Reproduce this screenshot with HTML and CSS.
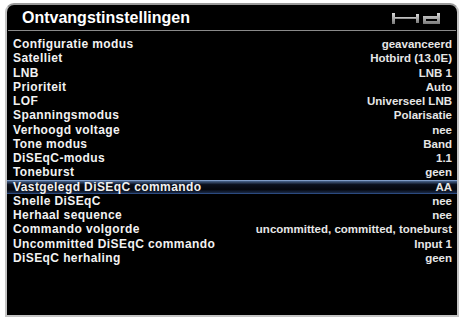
FILE: index.html
```html
<!DOCTYPE html>
<html lang="nl">
<head>
    <meta charset="UTF-8">
    <meta name="viewport" content="width=device-width, initial-scale=1.0">
    <title>Ontvangstinstellingen</title>
    <link rel="stylesheet" href="styles.css">
</head>
<body>
    <div class="panel">
        <div class="header">
            <h1>Ontvangstinstellingen</h1>
            <svg class="hd-logo" width="58" height="11" viewBox="0 0 58 11">
                <defs>
                    <linearGradient id="hdGrad" x1="0" y1="0" x2="0" y2="1">
                        <stop offset="0" stop-color="#d8d8d8"/>
                        <stop offset="1" stop-color="#7a7a7a"/>
                    </linearGradient>
                </defs>
                <rect x="0" y="0" width="3" height="11" fill="url(#hdGrad)"/>
                <rect x="3" y="4" width="21" height="2" fill="url(#hdGrad)"/>
                <rect x="24" y="1" width="3" height="9" fill="url(#hdGrad)"/>
                <path d="M31 3 h14 v-3 h3 v11 h-17 z M34 6 v2 h11 v-2 z" fill="url(#hdGrad)" fill-rule="evenodd"/>
            </svg>
        </div>

        <ul class="settings">
            <li><span>Configuratie modus</span><span>geavanceerd</span></li>
            <li><span>Satelliet</span><span>Hotbird (13.0E)</span></li>
            <li><span>LNB</span><span>LNB 1</span></li>
            <li><span>Prioriteit</span><span>Auto</span></li>
            <li><span>LOF</span><span>Universeel LNB</span></li>
            <li><span>Spanningsmodus</span><span>Polarisatie</span></li>
            <li><span>Verhoogd voltage</span><span>nee</span></li>
            <li><span>Tone modus</span><span>Band</span></li>
            <li><span>DiSEqC-modus</span><span>1.1</span></li>
            <li><span>Toneburst</span><span>geen</span></li>
            <li class="selected"><span>Vastgelegd DiSEqC commando</span><span>AA</span></li>
            <li><span>Snelle DiSEqC</span><span>nee</span></li>
            <li><span>Herhaal sequence</span><span>nee</span></li>
            <li><span>Commando volgorde</span><span>uncommitted, committed, toneburst</span></li>
            <li><span>Uncommitted DiSEqC commando</span><span>Input 1</span></li>
            <li><span>DiSEqC herhaling</span><span>geen</span></li>
        </ul>
    </div>
</body>
</html>
```

FILE: styles.css
```css
body {
    margin: 0;
    background: #ffffff;
    font-family: "Liberation Sans", Arial, sans-serif;
}

.panel {
    margin: 3px 0 0 5px;
    width: 450px;
    height: 310px;
    background: #000000;
    border: 2px solid #c4c4c4;
    border-top-color: #9a9a9a;
    border-radius: 9px 9px 0 0;
}

.header {
    display: flex;
    justify-content: space-between;
    align-items: center;
    height: 25px;
    padding: 0 6px 0 14px;
    margin: 0 1px;
    border-bottom: 1px solid #8a8a8a;
}

.header h1 {
    margin: 0;
    font-size: 16px;
    font-weight: bold;
    color: #ffffff;
}

.hd-logo {
    margin-top: 1px;
}

.settings {
    list-style: none;
    margin: 0;
    padding: 6px 5px 0 6px;
}

.settings li {
    display: flex;
    justify-content: space-between;
    height: 14.25px;
    line-height: 14px;
    font-size: 12px;
    font-weight: bold;
    color: #f2f2f2;
}

.settings li span:first-child {
    letter-spacing: 0.4px;
}

.settings li span:last-child {
    font-size: 11.5px;
    color: #e6e6e6;
}

.settings li.selected {
    margin: 0 -5px 0 -6px;
    padding: 0 5px 0 6px;
    background: linear-gradient(#4a6690, #0a0f1c 30%, #05070d 70%, #1a2a48);
    border-top: 1px solid #7f9cc8;
    border-bottom: 1px solid #2b4a80;
    height: 12.25px;
    line-height: 12px;
}
```
